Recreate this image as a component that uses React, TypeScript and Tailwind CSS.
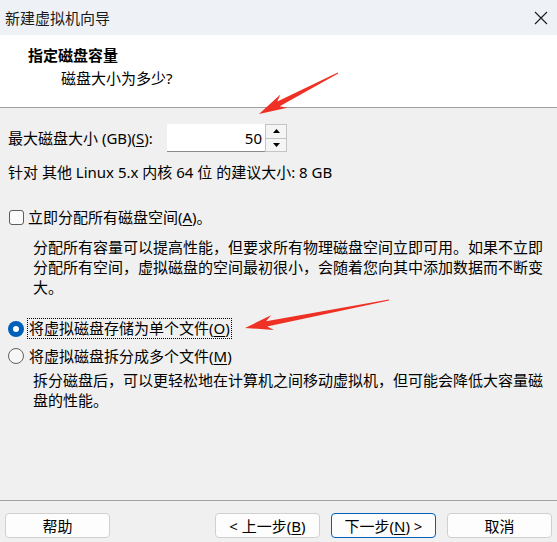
import type { ReactNode } from "react";

const font = { fontFamily: '"Noto Sans", "Noto Sans CJK SC", sans-serif' };

function arrow(tx: number, ty: number, hx: number, hy: number) {
  const dx = hx - tx;
  const dy = hy - ty;
  const len = Math.hypot(dx, dy);
  const ux = dx / len;
  const uy = dy / len;
  const nx = -uy;
  const ny = ux;
  const bx = hx - ux * 22;
  const by = hy - uy * 22;
  const wx = hx - ux * 28;
  const wy = hy - uy * 28;
  const pts = [
    [tx + nx * 0.5, ty + ny * 0.5],
    [bx + nx * 2.6, by + ny * 2.6],
    [wx + nx * 7.5, wy + ny * 7.5],
    [hx, hy],
    [wx - nx * 7.5, wy - ny * 7.5],
    [bx - nx * 2.6, by - ny * 2.6],
    [tx - nx * 0.5, ty - ny * 0.5],
  ];
  return pts.map((p) => p.map((v) => v.toFixed(1)).join(",")).join(" ");
}

function Key({ children }: { children: ReactNode }) {
  return <span className="underline underline-offset-2">{children}</span>;
}

function Button({ children, primary }: { children: ReactNode; primary?: boolean }) {
  return (
    <button
      className={`flex h-[25px] w-[105px] items-center justify-center rounded-[4px] border bg-[#fdfdfd] text-[15px] text-black ${
        primary ? "border-[#005fb8]" : "border-[#d0d0d0]"
      }`}
    >
      {children}
    </button>
  );
}

export default function App() {
  return (
    <div
      className="relative flex h-[542px] w-[557px] flex-col overflow-hidden bg-[#f0f0f0] text-[15px] leading-[20px] text-black"
      style={font}
    >
      {/* title bar */}
      <div className="flex h-[35px] shrink-0 items-center justify-between bg-[#eef2f7] pl-[5px] pr-[8px]">
        <span className="text-[#1b1b1b]">新建虚拟机向导</span>
        <svg width="14" height="14" viewBox="0 0 14 14" className="mr-[1px]">
          <path d="M1 1L13 13M13 1L1 13" stroke="#1b1b1b" strokeWidth="1.1" />
        </svg>
      </div>

      {/* header */}
      <div className="h-[73px] shrink-0 border-b border-[#a0a0a0] bg-white pl-[28px] pt-[10px]">
        <p className="font-bold">指定磁盘容量</p>
        <p className="ml-[33px] mt-[3px]">磁盘大小为多少?</p>
      </div>

      {/* body */}
      <div className="flex-1 px-[8px]">
        <div className="mt-[16px] flex items-center">
          <span className="w-[159px] whitespace-nowrap">
            最大磁盘大小 (GB)(<Key>S</Key>):
          </span>
          <div className="flex h-[28px]">
            <div className="flex w-[98px] items-center justify-end border-b border-[#8a8a8a] bg-white pr-[3px]">
              50
            </div>
            <div className="flex w-[22px] flex-col border border-[#c4c4c4] bg-[#f5f5f5]">
              <div className="flex flex-1 items-center justify-center border-b border-[#c4c4c4]">
                <svg width="7" height="4" viewBox="0 0 7 4">
                  <path d="M0 4L3.5 0L7 4Z" fill="#000" />
                </svg>
              </div>
              <div className="flex flex-1 items-center justify-center">
                <svg width="7" height="4" viewBox="0 0 7 4">
                  <path d="M0 0L7 0L3.5 4Z" fill="#000" />
                </svg>
              </div>
            </div>
          </div>
        </div>

        <p className="mt-[10px] whitespace-nowrap">针对 其他 Linux 5.x 内核 64 位 的建议大小: 8 GB</p>

        <div className="mt-[25px] flex items-center">
          <span className="ml-[1px] h-[15px] w-[15px] rounded-[3px] border border-[#5d5d5d] bg-[#fbfbfb]" />
          <span className="ml-[4px]">
            立即分配所有磁盘空间(<Key>A</Key>)。
          </span>
        </div>
        <div className="ml-[25px] mt-[10px] whitespace-nowrap">
          <p>分配所有容量可以提高性能，但要求所有物理磁盘空间立即可用。如果不立即</p>
          <p>分配所有空间，虚拟磁盘的空间最初很小，会随着您向其中添加数据而不断变</p>
          <p>大。</p>
        </div>

        <div className="mt-[21px] flex items-center">
          <span className="flex h-[16px] w-[16px] items-center justify-center rounded-full bg-[#005fb8]">
            <span className="h-[6px] w-[6px] rounded-full bg-white" />
          </span>
          <span className="ml-[3px] border border-dotted border-black px-[1px] leading-[19px]">
            将虚拟磁盘存储为单个文件(<Key>O</Key>)
          </span>
        </div>
        <div className="mt-[7px] flex items-center">
          <span className="h-[16px] w-[16px] rounded-full border border-[#616161] bg-[#f7f7f7]" />
          <span className="ml-[5px]">
            将虚拟磁盘拆分成多个文件(<Key>M</Key>)
          </span>
        </div>
        <div className="ml-[25px] mt-[4px] whitespace-nowrap">
          <p>拆分磁盘后，可以更轻松地在计算机之间移动虚拟机，但可能会降低大容量磁</p>
          <p>盘的性能。</p>
        </div>
      </div>

      {/* footer */}
      <div className="flex shrink-0 justify-between border-t border-[#a0a0a0] px-[5px] pb-[4px] pt-[12px]">
        <Button>帮助</Button>
        <div className="flex gap-[11px]">
          <Button>
            &lt; 上一步(<Key>B</Key>)
          </Button>
          <Button primary>
            下一步(<Key>N</Key>) &gt;
          </Button>
          <Button>取消</Button>
        </div>
      </div>

      {/* annotation arrows */}
      <svg className="pointer-events-none absolute left-0 top-0" width="557" height="542">
        <polygon points={arrow(338, 73, 259, 114)} fill="#ee3124" />
        <polygon points={arrow(389, 300, 245, 328)} fill="#ee3124" />
      </svg>
    </div>
  );
}
